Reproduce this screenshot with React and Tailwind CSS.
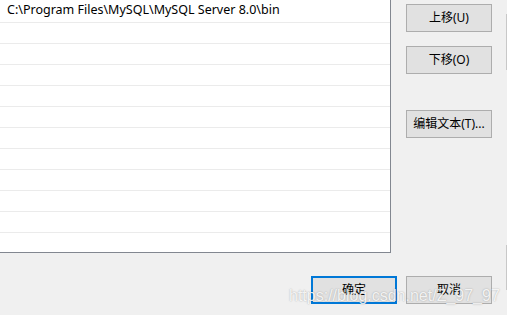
import React from 'react';

const font = { fontFamily: '"Noto Sans", "Noto Sans CJK SC", sans-serif' };

function Btn({ children, primary, className = '' }) {
  return (
    <div
      className={`flex h-[28px] w-[86px] items-center justify-center bg-[#e1e1e1] text-[12px] text-black ${
        primary ? 'border-2 border-[#0078d7]' : 'border border-[#adadad]'
      } ${className}`}
    >
      {children}
    </div>
  );
}

export default function App() {
  const rows = Array.from({ length: 10 });
  return (
    <div
      className="relative flex h-[315px] w-[507px] flex-col overflow-hidden bg-[#f0f0f0]"
      style={font}
    >
      <div className="flex h-[253px]">
        <div className="flex h-[253px] w-[391px] flex-col border-b border-r border-[#828790] bg-white">
          <div className="flex h-[23px] items-center border-b border-[#ebebeb] pl-[7px] pb-[1px] text-[12.5px] text-black">
            C:\Program Files\MySQL\MySQL Server 8.0\bin
          </div>
          {rows.map((_, i) => (
            <div key={i} className="h-[21px] border-b border-[#ebebeb]" />
          ))}
        </div>
        <div className="flex flex-col pl-[15px] pt-[4px]">
          <Btn>上移(U)</Btn>
          <Btn className="mt-[14px]">下移(O)</Btn>
          <Btn className="mt-[36px]">编辑文本(T)...</Btn>
        </div>
      </div>
      <div className="flex gap-[9px] pl-[311px] pt-[23px]">
        <Btn primary>确定</Btn>
        <Btn>取消</Btn>
      </div>
      <div className="absolute right-0 top-[14px] h-[56px] w-px bg-[#c8c8c8]" />
      <div className="absolute right-0 top-[245px] h-[45px] w-px bg-[#c8c8c8]" />
      <div
        className="pointer-events-none absolute left-[289px] top-[284px] text-[16px] leading-[24px] text-white/85"
        style={{ fontFamily: '"Liberation Sans", Arial, sans-serif', textShadow: '0 0 1.5px rgba(0,0,0,0.35)' }}
      >
        https://blog.csdn.net/Z_97_97
      </div>
    </div>
  );
}
